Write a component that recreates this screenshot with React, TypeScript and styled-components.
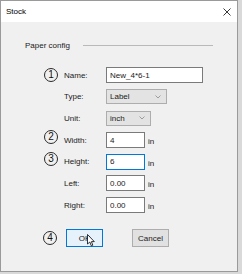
import React from 'react';
import styled, { createGlobalStyle } from 'styled-components';

const GlobalStyle = createGlobalStyle`
    html, body {
        margin: 0;
        padding: 0;
        background: #d9d9d9;
        font-family: "Liberation Sans", Arial, sans-serif;
    }
`;

const Window = styled.div`
    width: 238px;
    height: 272px;
    box-sizing: border-box;
    border: 1px solid #9a9a9a;
    background: #f0f0f0;
    display: flex;
    flex-direction: column;
`;

const TitleBar = styled.div`
    height: 21px;
    background: #ffffff;
    display: flex;
    align-items: center;
    justify-content: space-between;
    padding: 0 5px;
    font-size: 8px;
    color: #000;
`;

const CloseIcon = styled.svg`
    width: 8px;
    height: 8px;
    margin-right: 1px;
`;

const Body = styled.div`
    flex: 1;
    display: flex;
    flex-direction: column;
`;

const GroupHeader = styled.div`
    display: flex;
    align-items: center;
    margin: 18px 0 0 24px;
    width: 188px;
    height: 10px;
    font-size: 8px;
    color: #1a1a1a;
    gap: 13px;
`;

const GroupLine = styled.div`
    flex: 1;
    height: 1px;
    background: #b9b9b9;
`;

const Form = styled.div`
    display: grid;
    grid-template-columns: 14px 36px auto;
    grid-auto-rows: 16px;
    column-gap: 6px;
    row-gap: 5.7px;
    margin: 17px 0 0 43px;
    align-items: center;
`;

const Badge = styled.span<{ $shift?: number }>`
    width: 12px;
    height: 12px;
    border: 1px solid #2a2a2a;
    border-radius: 50%;
    display: flex;
    align-items: center;
    justify-content: center;
    font-size: 10px;
    font-weight: 500;
    color: #111;
    line-height: 1;
    transform: translateY(${p => p.$shift ?? 0}px);
`;

const Label = styled.span`
    grid-column: 2;
    font-size: 8px;
    color: #1a1a1a;
`;

const Field = styled.div`
    grid-column: 3;
    display: flex;
    align-items: center;
    gap: 3px;
`;

const TextBox = styled.div<{ $width: number; $focused?: boolean }>`
    width: ${p => p.$width}px;
    height: 16px;
    box-sizing: border-box;
    background: #fff;
    border: 1px solid ${p => (p.$focused ? '#0078d7' : '#7a7a7a')};
    font-size: 8px;
    color: #1a1a1a;
    padding: 0 3px;
    display: flex;
    align-items: center;
`;

const Select = styled.div<{ $width: number }>`
    width: ${p => p.$width}px;
    height: 15px;
    box-sizing: border-box;
    background: #e3e3e3;
    border: 1px solid #adadad;
    font-size: 8px;
    color: #1a1a1a;
    padding: 0 5px 0 3px;
    display: flex;
    align-items: center;
    justify-content: space-between;
`;

const Unit = styled.span`
    font-size: 8px;
    color: #1a1a1a;
    margin-top: 3px;
`;

const ButtonRow = styled.div`
    display: flex;
    align-items: center;
    margin: 16px 0 0 42px;
    position: relative;
`;

const Button = styled.div<{ $primary?: boolean }>`
    width: 37px;
    height: 18px;
    box-sizing: border-box;
    background: ${p => (p.$primary ? '#e5f1fb' : '#e1e1e1')};
    border: 1px solid ${p => (p.$primary ? '#0078d7' : '#adadad')};
    font-size: 8px;
    color: #1a1a1a;
    display: flex;
    align-items: center;
    justify-content: center;
    margin-left: ${p => (p.$primary ? 9 : 29)}px;
`;

const Cursor = styled.svg`
    position: absolute;
    left: 44px;
    top: 5px;
    width: 8px;
    height: 13px;
`;

const Chevron = () => (
    <svg width="6" height="4" viewBox="0 0 6 4">
        <path d="M0.5 0.5 L3 3 L5.5 0.5" fill="none" stroke="#8a8a8a" strokeWidth="0.8" />
    </svg>
);

const rows = [
    { badge: '1', label: 'Name:', kind: 'text', value: 'New_4*6-1', width: 97 },
    { label: 'Type:', kind: 'select', value: 'Label', width: 61 },
    { label: 'Unit:', kind: 'select', value: 'inch', width: 45 },
    { badge: '2', shift: -3, label: 'Width:', kind: 'text', value: '4', width: 39, unit: true },
    { badge: '3', shift: -3, label: 'Height:', kind: 'text', value: '6', width: 39, unit: true, focused: true },
    { label: 'Left:', kind: 'text', value: '0.00', width: 39, unit: true },
    { label: 'Right:', kind: 'text', value: '0.00', width: 39, unit: true },
];

const App: React.FC = () => {
    return (
        <>
            <GlobalStyle />
            <Window>
                <TitleBar>
                    <span>Stock</span>
                    <CloseIcon viewBox="0 0 8 8">
                        <path d="M0.5 0.5 L7.5 7.5 M7.5 0.5 L0.5 7.5" stroke="#222" strokeWidth="0.9" />
                    </CloseIcon>
                </TitleBar>
                <Body>
                    <GroupHeader>
                        <span>Paper config</span>
                        <GroupLine />
                    </GroupHeader>
                    <Form>
                        {rows.map(row => (
                            <React.Fragment key={row.label}>
                                {row.badge ? <Badge $shift={row.shift}>{row.badge}</Badge> : <span />}
                                <Label>{row.label}</Label>
                                <Field>
                                    {row.kind === 'text' ? (
                                        <TextBox $width={row.width} $focused={row.focused}>{row.value}</TextBox>
                                    ) : (
                                        <Select $width={row.width}>
                                            {row.value}
                                            <Chevron />
                                        </Select>
                                    )}
                                    {row.unit && <Unit>in</Unit>}
                                </Field>
                            </React.Fragment>
                        ))}
                    </Form>
                    <ButtonRow>
                        <Badge>4</Badge>
                        <Button $primary>OK</Button>
                        <Button>Cancel</Button>
                        <Cursor viewBox="0 0 8 13">
                            <path d="M0.5 0.5 L0.5 10 L2.8 8 L4.3 11.8 L5.8 11.2 L4.4 7.6 L7.3 7.6 Z" fill="#fff" stroke="#000" strokeWidth="0.8" strokeLinejoin="round" />
                        </Cursor>
                    </ButtonRow>
                </Body>
            </Window>
        </>
    );
};

export default App;
